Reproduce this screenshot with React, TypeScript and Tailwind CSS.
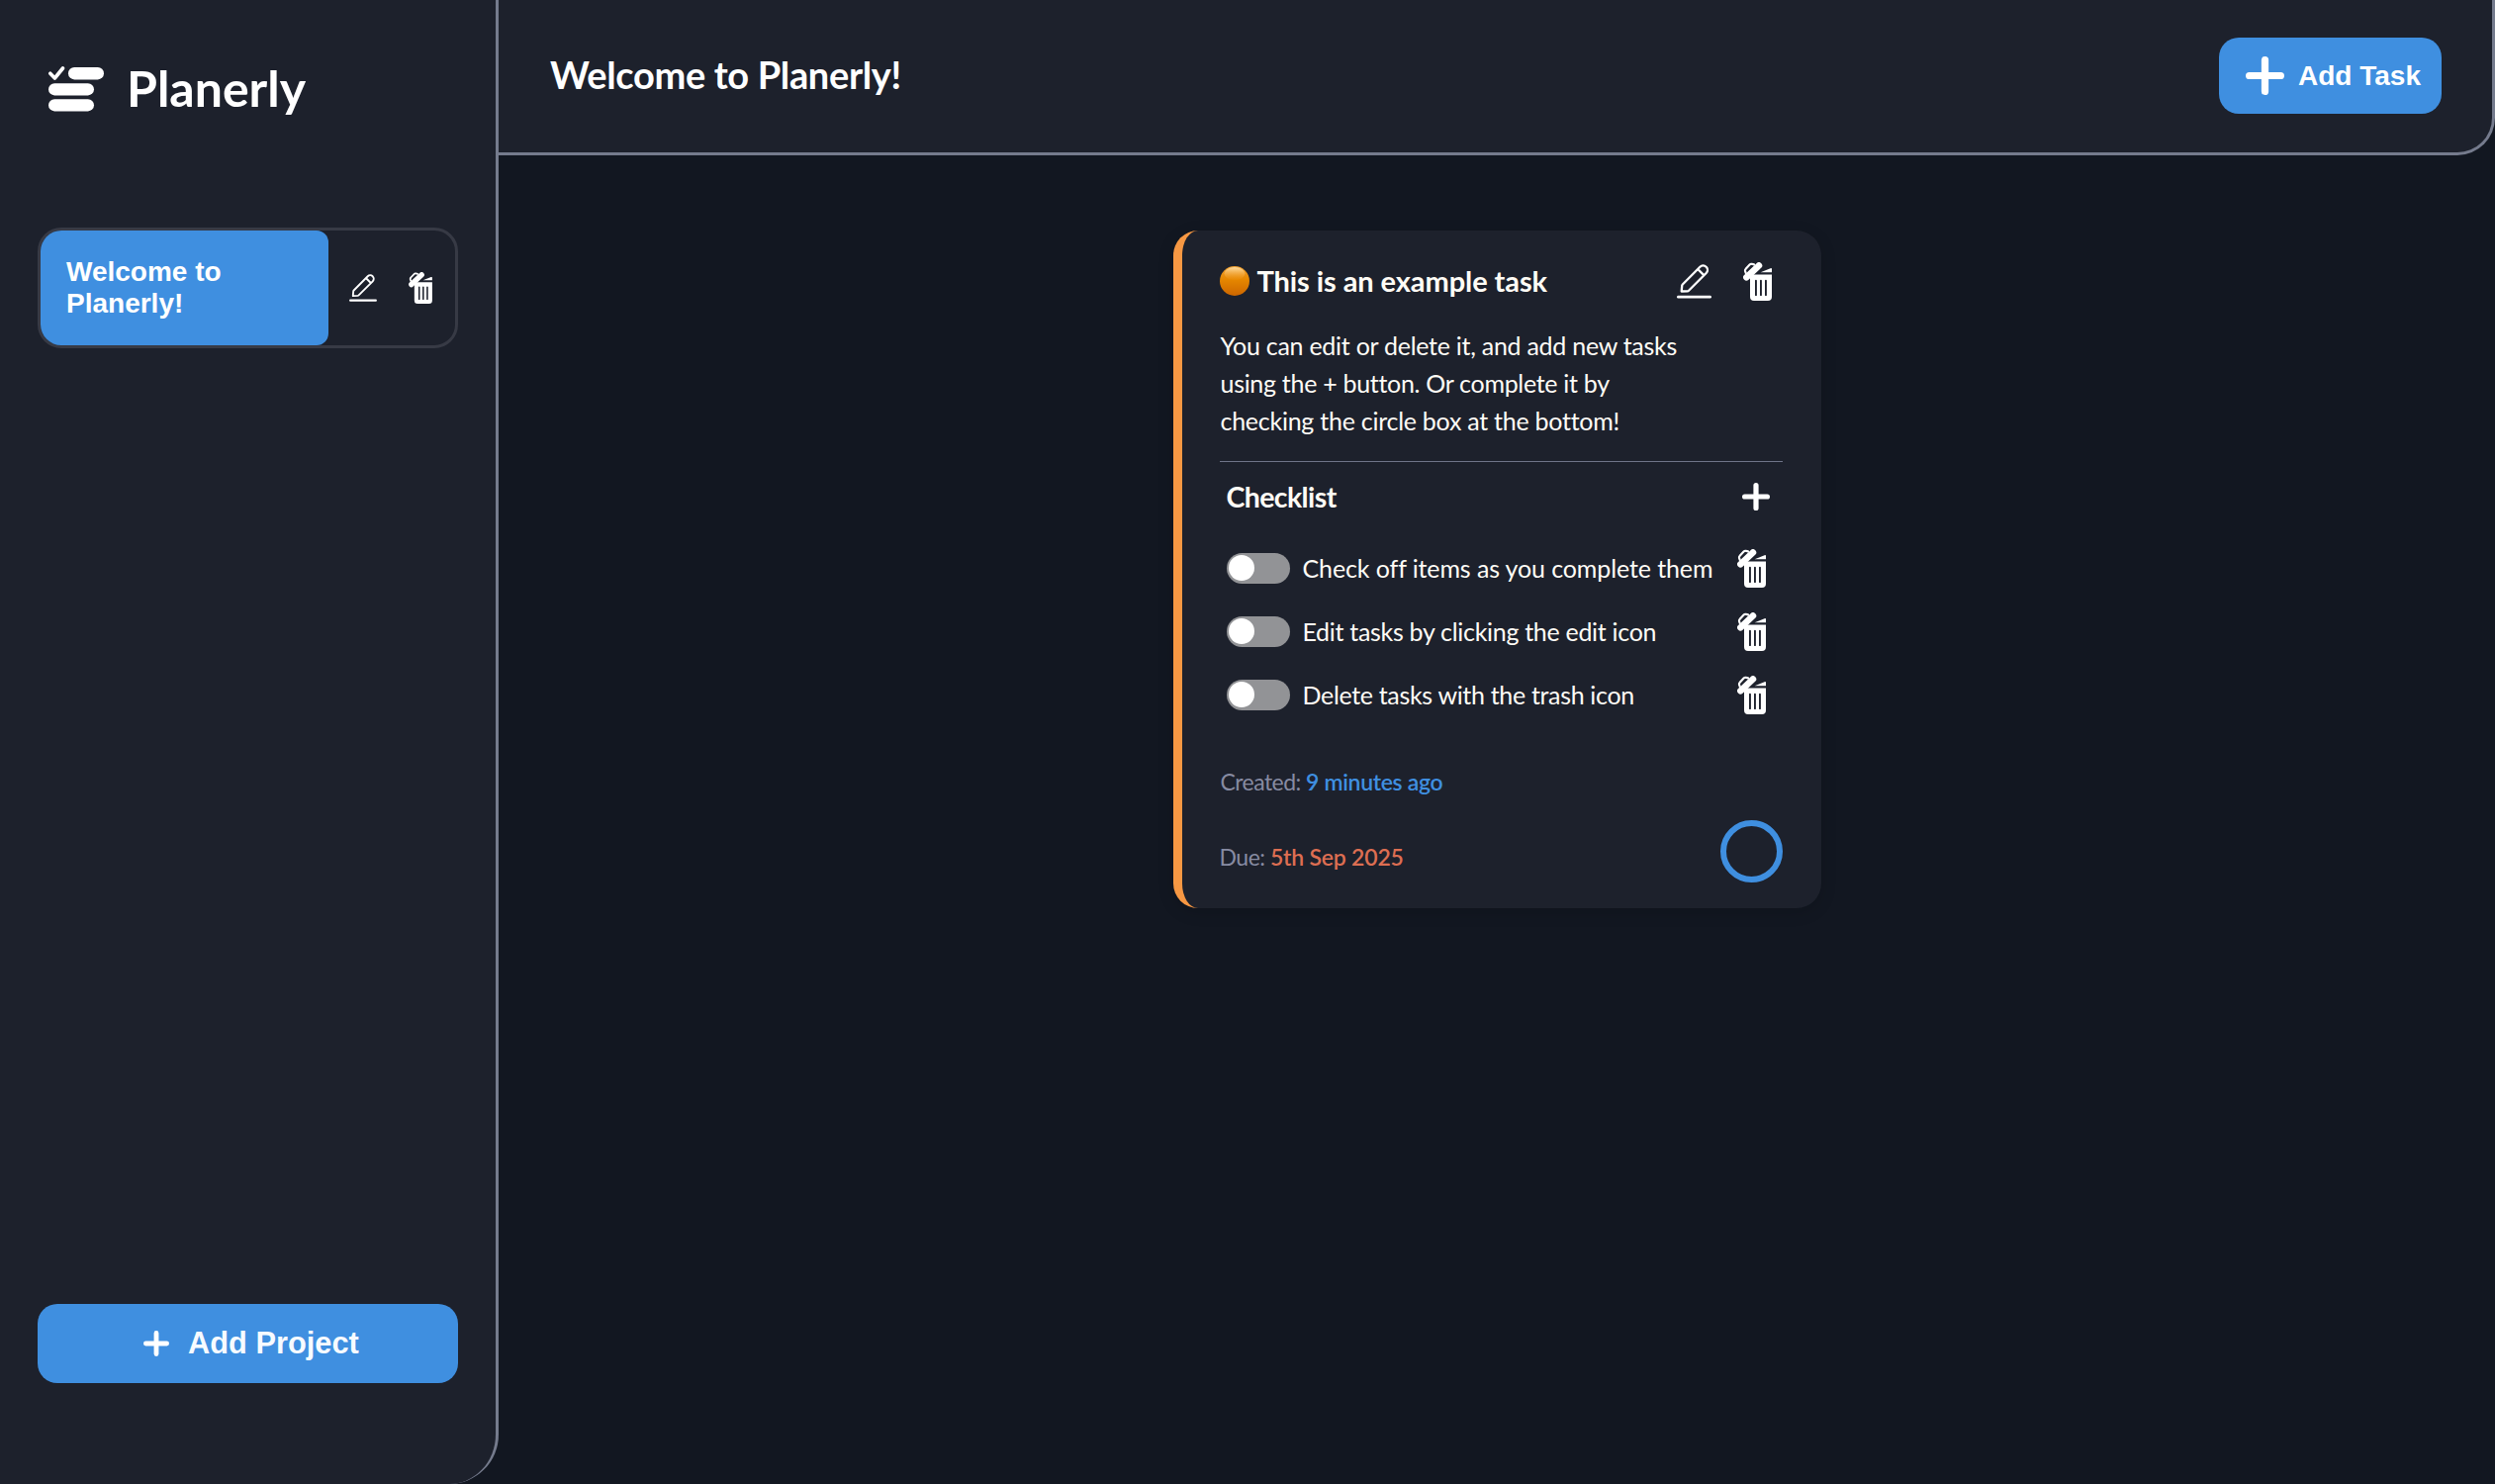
import React from "react";

function LogoIcon() {
  return (
    <svg className="h-[46px] w-[57px] shrink-0" viewBox="0 0 57 46" fill="#fff">
      <path d="M1.8 7.2 6.4 12 14.5 2" fill="none" stroke="#fff" strokeWidth="3.6" strokeLinecap="round" strokeLinejoin="round" />
      <rect x="20" y="1" width="36" height="12.4" rx="6.2" />
      <rect x="0" y="17.2" width="46" height="12.2" rx="6.1" />
      <rect x="0" y="33.2" width="46" height="12.2" rx="6.1" />
    </svg>
  );
}

function PencilIcon({ className }: { className: string }) {
  return (
    <svg className={className} viewBox="0 0 35 36" fill="none" stroke="#fff" strokeLinecap="round" strokeLinejoin="round">
      <path
        strokeWidth="2.3"
        d="M4.7 27.5 5.2 21.8a2 2 0 0 1 .6-1.3L23.4 2.7a4.4 4.4 0 0 1 6.2 0l.1.1a4.4 4.4 0 0 1 0 6.2L12 26.7a2 2 0 0 1-1.3.6ZM21.4 5.2l5.9 5.9"
      />
      <path strokeWidth="2.7" d="M1.4 33.2h32.2" />
    </svg>
  );
}

function TrashIcon({ className }: { className: string }) {
  return (
    <svg className={className} viewBox="0 0 29 39" fill="#fff">
      <path
        fillRule="evenodd"
        d="M9 12.6h20v22.4a4 4 0 0 1-4 4H11a4 4 0 0 1-4-4V15ZM12 18.4v15a1 1 0 0 0 1.9 0v-15a1 1 0 0 0-1.9 0Zm5 0v15a1 1 0 0 0 1.9 0v-15a1 1 0 0 0-1.9 0Zm5 0v15a1 1 0 0 0 1.9 0v-15a1 1 0 0 0-1.9 0Z"
      />
      <path d="M17.6 10.2 27.6 6.2Q29 5.8 29 7v3.2Z" />
      <path d="M3.3 15.3 16 3.4" stroke="#fff" strokeWidth="6.5" strokeLinecap="round" />
      <path d="M2.7 11 2 8.8Q1.8 7.6 2.7 6.7L6.6 2.5Q7.5 1.6 8.7 1.8L11 2.4" fill="none" stroke="#fff" strokeWidth="2.2" strokeLinecap="round" />
    </svg>
  );
}

function PlusIcon({ className, weight }: { className: string; weight: number }) {
  return (
    <svg className={className} viewBox="0 0 28 28" stroke="#fff" strokeWidth={weight} strokeLinecap="round">
      <path d="M14 2.6v22.8M2.6 14h22.8" />
    </svg>
  );
}

function PriorityDot() {
  return (
    <svg className="mt-[4px] h-[30px] w-[30px] shrink-0" viewBox="0 0 30 30">
      <defs>
        <linearGradient id="dot" x1="0" y1="0" x2="0" y2="1">
          <stop offset="0" stopColor="#f0a030" />
          <stop offset="0.45" stopColor="#e68700" />
          <stop offset="1" stopColor="#cc6600" />
        </linearGradient>
        <linearGradient id="gloss" x1="0" y1="0" x2="0" y2="1">
          <stop offset="0" stopColor="#ffe0a8" stopOpacity="0.95" />
          <stop offset="1" stopColor="#f39a1c" stopOpacity="0.1" />
        </linearGradient>
      </defs>
      <circle cx="15" cy="15" r="15" fill="url(#dot)" />
      <ellipse cx="15" cy="7.6" rx="10.5" ry="6.6" fill="url(#gloss)" />
    </svg>
  );
}

const items = [
  { text: "Check off items as you complete them", spacing: "tracking-[-0.11px]" },
  { text: "Edit tasks by clicking the edit icon", spacing: "tracking-[-0.3px]" },
  { text: "Delete tasks with the trash icon", spacing: "tracking-[-0.33px]" },
];

function Sidebar() {
  return (
    <aside className="flex w-[504px] shrink-0 flex-col rounded-br-[50px] border-r-[3px] border-[#757b8d] bg-[#1d212c] pl-[38px] pr-[38px]">
      <div className="mt-[60px] flex h-[60px] items-center pl-[11px]">
        <LogoIcon />
        <h1 className="-mt-[2px] ml-[22px] whitespace-nowrap text-[50px] leading-[60px] font-bold text-white">Planerly</h1>
      </div>
      <div className="mt-[110px] flex h-[122px] w-[425px] items-center rounded-[24px] border-[3px] border-[#373a45]">
        <button className="flex h-[116px] w-[291px] items-center rounded-l-[21px] rounded-r-[12px] bg-[#3f8fe0] pl-[26px] text-left font-['Liberation_Sans',sans-serif] text-[28px] leading-[32px] font-bold text-white">
          Welcome to
          <br />
          Planerly!
        </button>
        <PencilIcon className="ml-[21px] h-[29px] w-[28px]" />
        <TrashIcon className="ml-[32px] h-[32px] w-[24px]" />
      </div>
      <button className="mt-auto mb-[102px] flex h-[80px] w-[425px] items-center rounded-[20px] bg-[#3f8fe0] pl-[107px] font-['Liberation_Sans',sans-serif] text-[30.8px] leading-[36px] font-bold text-[#f7fbff]">
        <PlusIcon className="h-[26px] w-[26px]" weight={5.2} />
        <span className="ml-[19px] whitespace-nowrap">Add Project</span>
      </button>
    </aside>
  );
}

function TaskCard() {
  return (
    <article className="mt-[76px] h-[685px] w-[655px] rounded-[25px] border-l-[9px] border-[#f79843] bg-[#1d212c] pt-[32px] pr-[39px] pl-[38px] text-[#fffcf6] shadow-[0_4px_16px_rgba(0,0,0,0.15)]">
      <header className="flex h-[39px]">
        <PriorityDot />
        <h3 className="ml-[8px] whitespace-nowrap text-[29px] leading-[38px] font-bold tracking-[-0.08px]">This is an example task</h3>
        <PencilIcon className="mt-[2px] ml-auto h-[36px] w-[35px] shrink-0" />
        <TrashIcon className="mr-[11px] ml-[32px] h-[39px] w-[29px] shrink-0" />
      </header>
      <p className="mt-[26px] h-[137px] border-b border-[#6f7488] pl-px text-[25px] leading-[38px] whitespace-nowrap">
        <span className="tracking-[-0.27px]">You can edit or delete it, and add new tasks</span>
        <br />
        <span className="tracking-[-0.3px]">using the + button. Or complete it by</span>
        <br />
        <span className="tracking-[-0.26px]">checking the circle box at the bottom!</span>
      </p>
      <section className="pt-[18px] pl-[6px]">
        <div className="flex h-[34px] items-center justify-between pr-[13px] pl-px">
          <h4 className="-mt-px text-[28.5px] leading-[34px] font-bold tracking-[-0.6px]">Checklist</h4>
          <PlusIcon className="h-[28px] w-[28px]" weight={5.2} />
        </div>
        <ul className="mt-[23px]">
          {items.map((item) => (
            <li key={item.text} className="flex h-[64px] items-center">
              <span className="ml-[1px] flex h-[31px] w-[64px] items-center rounded-full bg-[#929396] pl-[2px]">
                <span className="h-[26px] w-[26px] rounded-full bg-white" />
              </span>
              <span className={`-mt-px ml-[13px] whitespace-nowrap text-[25px] leading-[36px] ${item.spacing}`}>{item.text}</span>
              <TrashIcon className="mr-[17px] ml-auto h-[39px] w-[29px] shrink-0" />
            </li>
          ))}
        </ul>
      </section>
      <p className="mt-[37px] h-[38px] pl-px whitespace-nowrap text-[23px] leading-[38px] text-[#878ba2]">
        <span className="tracking-[-0.55px]">Created: </span>
        <span className="font-semibold tracking-[-0.33px] text-[#3f8fe0]">9 minutes ago</span>
      </p>
      <div className="mt-[20px] flex h-[63px] items-center justify-between">
        <p className="mt-[11px] whitespace-nowrap text-[23px] leading-[38px] text-[#878ba2]">
          <span className="tracking-[-0.5px]">Due: </span>
          <span className="font-semibold tracking-[-0.2px] text-[#dd6e52]">5th Sep 2025</span>
        </p>
        <span className="h-[63px] w-[63px] rounded-full border-[6px] border-[#3f8fe0]" />
      </div>
    </article>
  );
}

export default function App() {
  return (
    <div className="flex h-[1500px] w-[2522px] overflow-hidden bg-[#121721] font-[Lato,sans-serif]">
      <Sidebar />
      <main className="flex flex-1 flex-col">
        <header className="flex h-[157px] items-start justify-between rounded-br-[38px] border-r-[3px] border-b-[3px] border-[#757b8d] bg-[#1d212c] pt-[38px] pr-[51px] pl-[52px]">
          <h2 className="-mt-px whitespace-nowrap text-[38px] leading-[76px] font-bold tracking-[-0.35px] text-white">Welcome to Planerly!</h2>
          <button className="flex h-[77px] w-[225px] items-center rounded-[20px] bg-[#3f8fe0] pl-[27px] font-['Liberation_Sans',sans-serif] text-[28px] leading-[32px] font-bold text-white">
            <PlusIcon className="h-[39px] w-[39px]" weight={5.2} />
            <span className="ml-[14px] whitespace-nowrap">Add Task</span>
          </button>
        </header>
        <div className="flex justify-center">
          <TaskCard />
        </div>
      </main>
    </div>
  );
}
